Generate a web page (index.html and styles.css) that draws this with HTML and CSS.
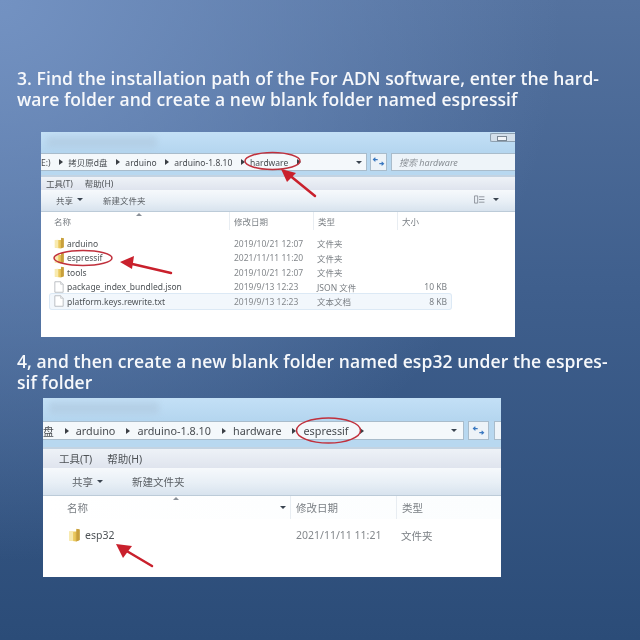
FILE: index.html
```html
<!DOCTYPE html>
<html lang="en">
<head>
<meta charset="utf-8">
<title>Install steps</title>
<link rel="stylesheet" href="styles.css">
</head>
<body>
<svg class="defs" width="0" height="0" aria-hidden="true">
  <defs>
    <linearGradient id="fold" x1="0" x2="1" y1="0" y2="0">
      <stop offset="0" stop-color="#f6e39a"/><stop offset="0.55" stop-color="#e9c65a"/><stop offset="1" stop-color="#c9a23a"/>
    </linearGradient>
    <symbol id="folder" viewBox="0 0 12 14">
      <path d="M1 3.500 L1 12.600 L8.200 13.600 L11.600 12 L11.600 1.400 L8.600 .8 L8.400 3.400 Z" fill="url(#fold)"/>
      <path d="M5 3 L5 13 L1 12.600 L1 3.500 Z" fill="#f8eab0"/>
      <path d="M8.400 1 L11.600 1.400 L11.600 12 L8.400 13.400 Z" fill="#c79f3c"/>
    </symbol>
    <symbol id="file" viewBox="0 0 12 14">
      <path d="M1 .7 H8 L11 3.700 V13.300 H1 Z" fill="#fff" stroke="#a9adb2" stroke-width=".9"/>
      <path d="M8 .7 V3.700 H11" fill="#eef0f2" stroke="#b5b9bd" stroke-width=".8"/>
    </symbol>
  </defs>
</svg>
<main class="page">
  <h2 class="step step-one">3. Find the installation path of the For ADN software, enter the hard-<br>ware folder and create a new blank folder named espressif</h2>

  <section class="win win-a">
    <div class="titlebar"><span class="smudge"></span><span class="winbtn"></span></div>
    <div class="navrow">
      <div class="address">
        <span class="crumb crumb-e">E:)</span><i class="sep"></i>
        <span class="crumb">拷贝原d盘</span><i class="sep"></i>
        <span class="crumb">arduino</span><i class="sep"></i>
        <span class="crumb">arduino-1.8.10</span><i class="sep"></i>
        <span class="crumb">hardware</span><i class="sep"></i>
        <i class="drop"></i>
      </div>
      <div class="refresh"><svg viewBox="0 0 16 12" class="refresh-ico"><path d="M7 3 H2 M4.200 .8 L1.800 3 L4.200 5.200" fill="none" stroke="#3a78c0" stroke-width="1.400"/><path d="M9 8 H14 M11.800 5.800 L14.200 8 L11.800 10.200" fill="none" stroke="#3a78c0" stroke-width="1.400"/></svg></div>
      <div class="search">搜索 hardware</div>
    </div>
    <div class="menubar"><span>工具(T)</span><span>帮助(H)</span></div>
    <div class="toolbar">
      <span class="tool">共享<i class="drop"></i></span><span class="tool">新建文件夹</span>
      <span class="views"><svg viewBox="0 0 12 10" class="views-ico"><path d="M.5 1 H4 V9 H.5 Z M5.500 2 H11.500 M5.500 5 H11.500 M5.500 8 H11.500" fill="none" stroke="#8a9098"/></svg><i class="drop"></i></span>
    </div>
    <div class="cols">
      <span>名称<i class="caret"></i></span><span>修改日期</span><span>类型</span><span>大小</span>
    </div>
    <ul class="rows">
      <li class="row"><span class="nm"><svg class="ico"><use href="#folder"/></svg>arduino</span><span>2019/10/21 12:07</span><span>文件夹</span><span></span></li>
      <li class="row"><span class="nm"><svg class="ico"><use href="#folder"/></svg>espressif</span><span>2021/11/11 11:20</span><span>文件夹</span><span></span></li>
      <li class="row"><span class="nm"><svg class="ico"><use href="#folder"/></svg>tools</span><span>2019/10/21 12:07</span><span>文件夹</span><span></span></li>
      <li class="row"><span class="nm"><svg class="ico"><use href="#file"/></svg>package_index_bundled.json</span><span>2019/9/13 12:23</span><span>JSON 文件</span><span class="sz">10 KB</span></li>
      <li class="row row-sel"><span class="nm"><svg class="ico"><use href="#file"/></svg>platform.keys.rewrite.txt</span><span>2019/9/13 12:23</span><span>文本文档</span><span class="sz">8 KB</span></li>
    </ul>
    <svg class="marks" viewBox="0 0 474 205">
      <ellipse cx="231.500" cy="29" rx="27.500" ry="8.500" class="oval"/>
      <ellipse cx="42" cy="126" rx="29" ry="7.500" class="oval"/>
      <path d="M274 64 L247 42" class="shaft"/><path d="M240 37 L255 41 L246 50 Z" class="head"/>
      <path d="M130 141 L87 131" class="shaft"/><path d="M79 130 L93 124 L91 137 Z" class="head"/>
    </svg>
  </section>

  <h2 class="step step-two">4, and then create a new blank folder named esp32 under the espres-<br>sif folder</h2>

  <section class="win win-b">
    <div class="titlebar"><span class="smudge"></span></div>
    <div class="navrow">
      <div class="address">
        <span class="crumb crumb-e">盘</span><i class="sep"></i>
        <span class="crumb">arduino</span><i class="sep"></i>
        <span class="crumb">arduino-1.8.10</span><i class="sep"></i>
        <span class="crumb">hardware</span><i class="sep"></i>
        <span class="crumb">espressif</span><i class="sep"></i>
        <i class="drop"></i>
      </div>
      <div class="refresh"><svg viewBox="0 0 16 12" class="refresh-ico"><path d="M7 3 H2 M4.200 .8 L1.800 3 L4.200 5.200" fill="none" stroke="#3a78c0" stroke-width="1.400"/><path d="M9 8 H14 M11.800 5.800 L14.200 8 L11.800 10.200" fill="none" stroke="#3a78c0" stroke-width="1.400"/></svg></div>
      <div class="search"></div>
    </div>
    <div class="menubar"><span>工具(T)</span><span>帮助(H)</span></div>
    <div class="toolbar">
      <span class="tool">共享<i class="drop"></i></span><span class="tool">新建文件夹</span>
    </div>
    <div class="cols">
      <span>名称<i class="caret"></i><i class="drop sort"></i></span><span>修改日期</span><span>类型</span>
    </div>
    <ul class="rows">
      <li class="row"><span class="nm"><svg class="ico"><use href="#folder"/></svg>esp32</span><span>2021/11/11 11:21</span><span>文件夹</span></li>
    </ul>
    <svg class="marks" viewBox="0 0 458 179">
      <ellipse cx="285.500" cy="32.500" rx="32" ry="12.500" class="oval"/>
      <path d="M109 168 L82 152" class="shaft"/><path d="M73 146 L89 148 L80 160 Z" class="head"/>
    </svg>
  </section>
</main>
</body>
</html>
```

FILE: styles.css
```css
* { box-sizing: border-box; }
html, body { margin: 0; padding: 0; }
.defs { position: absolute; }
.page {
  width: 640px;
  height: 640px;
  overflow: hidden;
  padding-top: 68px;
  background:
    radial-gradient(circle at 0 0, #7392c2 0, rgba(115,146,194,0) 62%),
    linear-gradient(180deg, #54729f 0%, #3f5f8d 45%, #2b4c78 100%);
  font-family: "Open Sans", "Noto Sans CJK SC", sans-serif;
}
.step {
  margin: 0 0 0 17px;
  color: #f6f8fb;
  font-family: "Open Sans", sans-serif;
  font-weight: 600;
  font-size: 17.500px;
  line-height: 21px;
  letter-spacing: .07px;
  white-space: nowrap;
  filter: blur(.3px);
}
.step-two { margin-top: 14px; }

.win {
  position: relative;
  display: flex;
  flex-direction: column;
  background: #fff;
  color: #6c7074;
  font-family: "Noto Sans", "Noto Sans CJK SC", sans-serif;
  filter: blur(.45px);
  overflow: hidden;
}
.win-a {
  width: 474px;
  height: 205px;
  margin: 22px 0 0 41px;
  font-size: 8.500px;
}
.win-b {
  width: 458px;
  height: 179px;
  margin: 5px 0 0 43px;
  font-size: 10.500px;
}

.titlebar {
  position: relative;
  background: linear-gradient(180deg, #c3e0f6, #b4d5ef);
}
.win-a .titlebar { height: 21px; }
.win-b .titlebar { height: 23px; }
.smudge {
  position: absolute;
  left: 6px;
  top: 4px;
  width: 110px;
  height: 12px;
  background: #afc8de;
  opacity: .6;
  filter: blur(3px);
}
.winbtn {
  position: absolute;
  right: 0;
  top: 1px;
  width: 25px;
  height: 9px;
  border: 1px solid #8ea0b0;
  border-right: 0;
  border-radius: 2px 0 0 2px;
  background: #d3dfea;
}
.winbtn::after {
  content: "";
  position: absolute;
  left: 6px;
  top: 2px;
  width: 8px;
  height: 3px;
  border: 1px solid #7a8794;
  background: #f2f5f8;
}

.navrow {
  display: flex;
  align-items: stretch;
  background: #b8d8f0;
}
.win-a .navrow { height: 22px; padding-bottom: 4px; }
.win-b .navrow { height: 26px; padding-bottom: 7px; }
.address {
  flex: 1;
  display: flex;
  align-items: center;
  background: #f4f8fb;
  border: 1px solid #a9bccb;
  border-left: 0;
  color: #484c51;
}
.win-a .address { gap: 5.400px; padding-right: 4px; }
.win-b .address { gap: 7px; padding-right: 6px; font-size: 10.800px; }
.crumb { white-space: nowrap; }
.win-a .crumb { margin-right: 3px; }
.win-b .crumb { margin-right: 4px; }
.sep {
  flex: none;
  width: 0;
  height: 0;
  border-left: 4px solid #3a3e44;
  border-top: 3px solid transparent;
  border-bottom: 3px solid transparent;
}
.drop {
  flex: none;
  width: 0;
  height: 0;
  border-top: 3px solid #3a4450;
  border-left: 3px solid transparent;
  border-right: 3px solid transparent;
}
.address .drop { margin-left: auto; }
.refresh {
  display: flex;
  align-items: center;
  justify-content: center;
  background: #edf3f8;
  border: 1px solid #a9bccb;
}
.win-a .refresh { width: 17px; margin: 0 4px 0 3px; }
.win-b .refresh { width: 21px; margin: 0 5px 0 4px; }
.refresh-ico { width: 13px; height: 10px; }
.search {
  background: #eef4f9;
  border: 1px solid #a9bccb;
  border-right: 0;
  font-style: italic;
  color: #888e94;
  display: flex;
  align-items: center;
}
.win-a .search { width: 124px; padding-left: 7px; font-size: 9px; }
.win-b .search { width: 7px; }

.menubar {
  display: flex;
  align-items: center;
  background: linear-gradient(180deg, #eef2f7, #dfe4ee);
  border-top: 2px solid #c3d3e2;
  color: #4e5256;
}
.win-a .menubar { height: 15px; gap: 12px; padding: 0 0 2px 5px; }
.win-b .menubar { height: 21px; gap: 15px; padding-left: 16px; font-size: 10.500px; }

.toolbar {
  display: flex;
  align-items: center;
  background: linear-gradient(180deg, #f6f9fc 0, #e8eff6 55%, #d8e3ee 100%);
  border-bottom: 1px solid #bccbd8;
  color: #5a5f64;
}
.win-a .toolbar { height: 22px; gap: 20px; padding: 0 0 2px 15px; }
.win-b .toolbar { height: 28px; gap: 29px; padding-left: 29px; }
.tool { display: inline-flex; align-items: center; gap: 4px; }
.views { margin-left: auto; margin-right: 16px; display: inline-flex; align-items: center; gap: 8px; }
.views-ico { width: 11px; height: 9px; }

.cols, .row {
  display: grid;
  align-items: center;
}
.win-a .cols { grid-template-columns: 175px 84px 84px 55px; height: 20px; padding: 0 0 2px 13px; }
.win-b .cols { grid-template-columns: 223px 106px 60px; height: 23px; padding-left: 24px; background: linear-gradient(90deg, #fff, #fbfdfe); }
.cols { color: #7a7f84; }
.cols span { position: relative; height: 100%; display: flex; align-items: center; }
.cols span + span { border-left: 1px solid #e8edf2; padding-left: 4px; }
.win-b .cols span + span { padding-left: 5px; }
.caret {
  position: absolute;
  top: 1px;
  width: 0;
  height: 0;
  border-bottom: 3px solid #8a9098;
  border-left: 3px solid transparent;
  border-right: 3px solid transparent;
}
.win-a .caret { left: 82px; }
.win-b .caret { left: 106px; }
.sort { position: absolute; right: 4px; top: 10px; }

.rows { list-style: none; margin: 0; padding: 0; }
.win-a .rows { margin: 4px 0 0 9px; width: 401px; }
.win-b .rows { margin: 8px 0 0 25px; }
.win-a .row { height: 14.500px; padding: 0 3px 0 4px; grid-template-columns: 180px 83px 80px 50px; }
.win-b .row { height: 16px; grid-template-columns: 228px 105px 60px; }
.row > span:nth-child(2) { color: #84888c; }
.row > span:nth-child(3) { color: #7a7f84; }
.nm { display: flex; align-items: center; color: #4e5357; }
.ico { flex: none; }
.win-a .ico { width: 10px; height: 12px; margin-right: 3px; }
.win-b .ico { width: 12px; height: 14px; margin-right: 5px; }
.sz { text-align: right; color: #7a7f84; }
.row-sel {
  background: #f2f7fc;
  box-shadow: 0 0 0 1px #dce9f5;
  border-radius: 2px;
}

.marks {
  position: absolute;
  left: 0;
  top: 0;
  width: 100%;
  height: 100%;
}
.oval { fill: none; stroke: #c0303c; stroke-width: 1.500; }
.shaft { fill: none; stroke: #c9202c; stroke-width: 2.500; stroke-linecap: round; }
.head { fill: #c9202c; }
```
